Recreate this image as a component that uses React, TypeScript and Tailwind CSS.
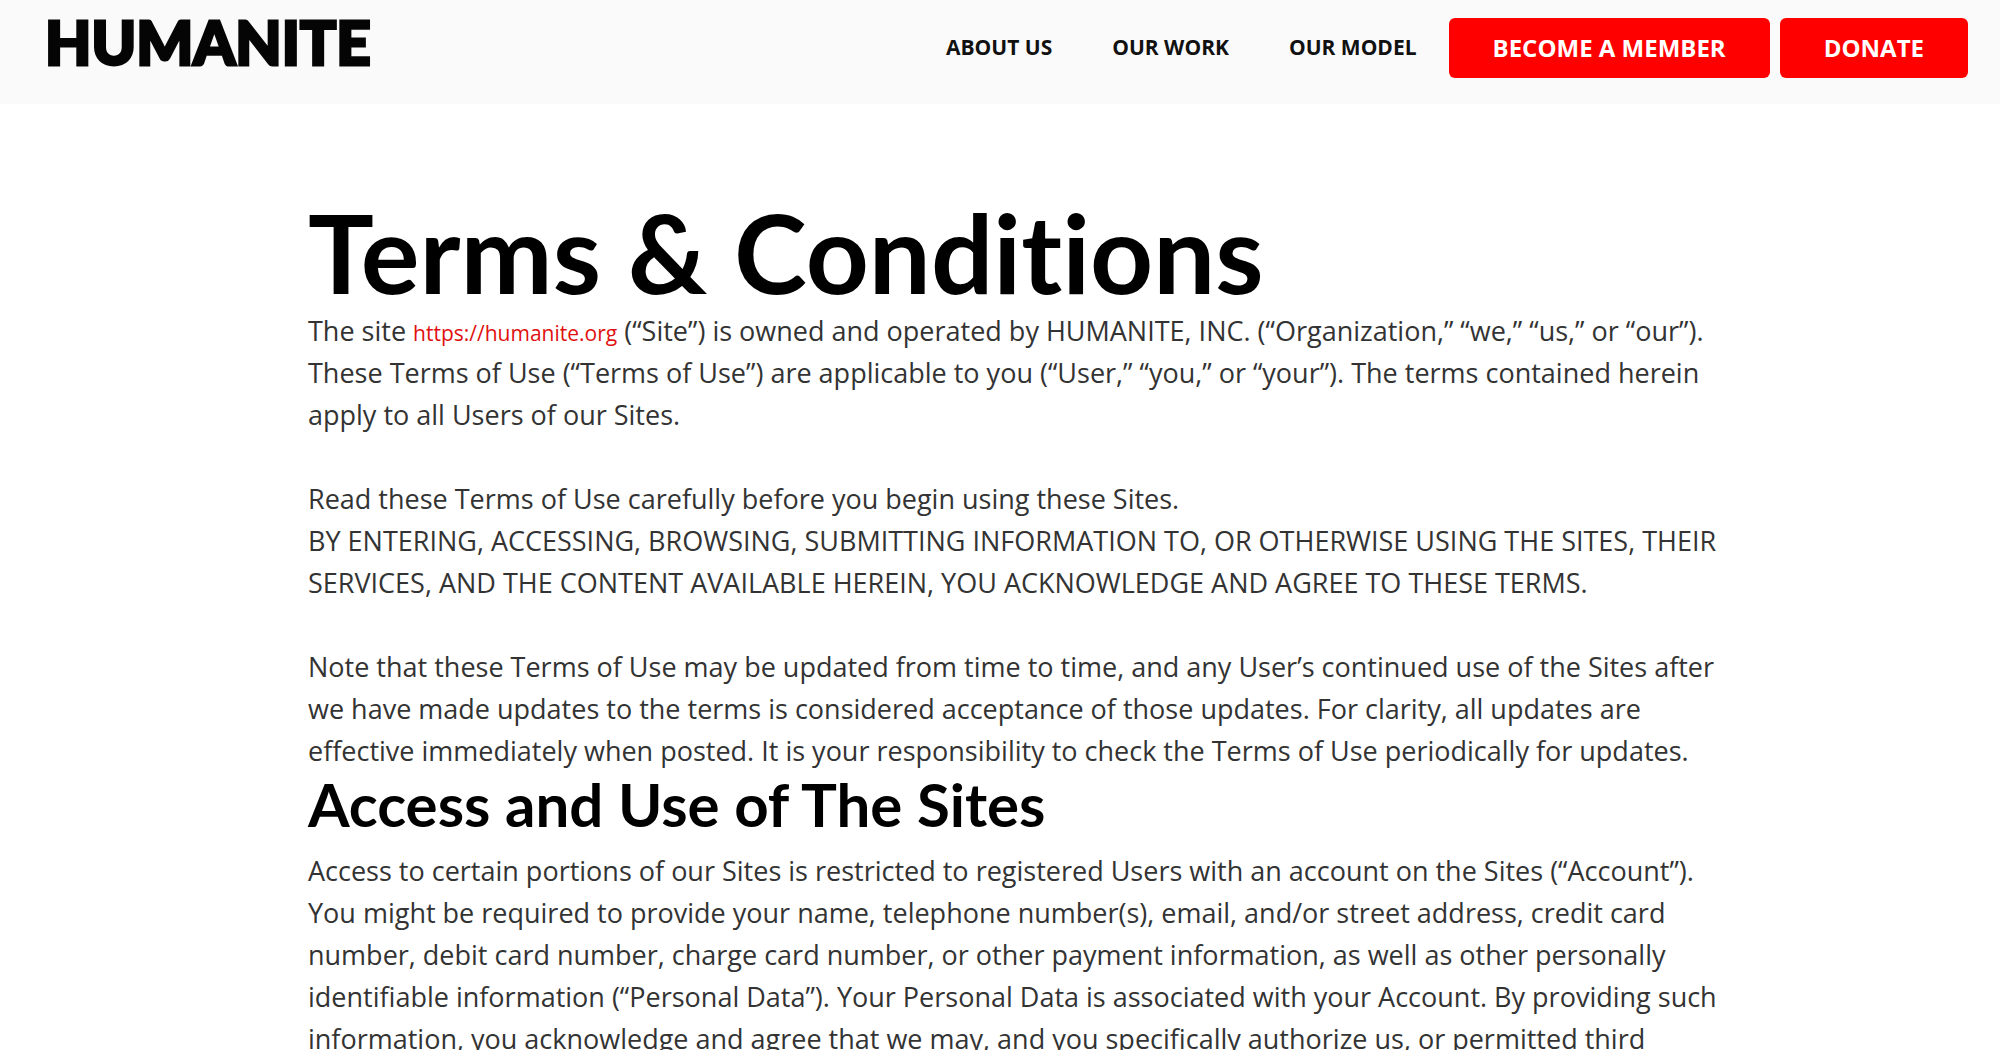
const navLinks = [
  { label: 'ABOUT US', href: '#about' },
  { label: 'OUR WORK', href: '#work' },
  { label: 'OUR MODEL', href: '#model' },
];

const Header = () => (
  <header className="flex h-26 items-start justify-between bg-[#fafafa] pr-8 pl-[45px]">
    <a
      href="#home"
      className="mt-2.5 font-['Lato',sans-serif] text-[60px] leading-16 font-black text-[#050505] [-webkit-text-stroke:3px_#050505]"
    >
      HUMANITE
    </a>
    <div className="mt-[18px] flex items-center">
      <nav className="mr-8 flex gap-15 text-[21px] font-bold text-[#111]">
        {navLinks.map((link) => (
          <a key={link.label} href={link.href}>{link.label}</a>
        ))}
      </nav>
      <div className="flex gap-2.5 text-2xl font-bold text-white">
        <button type="button" className="h-15 rounded-md bg-[#ff0000] px-11">BECOME A MEMBER</button>
        <button type="button" className="h-15 rounded-md bg-[#ff0000] px-11">DONATE</button>
      </div>
    </div>
  </header>
);

export default function App() {
  return (
    <div className="h-screen overflow-hidden bg-white font-['Open_Sans',sans-serif]">
      <Header />
      <main className="mt-[92px] ml-[15.4%] w-[70.9%] text-[27px] leading-[42px] text-[#333]">
        <h1 className="mb-1 font-['Lato',sans-serif] text-[110px] leading-[110px] font-bold text-black [font-variant-ligatures:none]">
          Terms &amp; Conditions
        </h1>
        <p>
          The site{' '}
          <a href="https://humanite.org" className="text-[21px] leading-none text-[#e01010]">https://humanite.org</a>{' '}
          (“Site”) is owned and operated by HUMANITE, INC. (“Organization,” “we,” “us,” or “our”). These Terms of Use
          (“Terms of Use”) are applicable to you (“User,” “you,” or “your”). The terms contained herein apply to all
          Users of our Sites.
        </p>
        <p className="mt-[42px]">Read these Terms of Use carefully before you begin using these Sites.</p>
        <p>
          BY ENTERING, ACCESSING, BROWSING, SUBMITTING INFORMATION TO, OR OTHERWISE USING THE SITES, THEIR SERVICES, AND
          THE CONTENT AVAILABLE HEREIN, YOU ACKNOWLEDGE AND AGREE TO THESE TERMS.
        </p>
        <p className="mt-[42px]">
          Note that these Terms of Use may be updated from time to time, and any User’s continued use of the Sites after
          we have made updates to the terms is considered acceptance of those updates. For clarity, all updates are
          effective immediately when posted. It is your responsibility to check the Terms of Use periodically for updates.
        </p>
        <h2 className="mb-3.5 font-['Lato',sans-serif] text-[60px] leading-16 font-bold text-black">
          Access and Use of The Sites
        </h2>
        <p>
          Access to certain portions of our Sites is restricted to registered Users with an account on the Sites
          (“Account”). You might be required to provide your name, telephone number(s), email, and/or street address,
          credit card number, debit card number, charge card number, or other payment information, as well as other
          personally identifiable information (“Personal Data”). Your Personal Data is associated with your Account. By
          providing such information, you acknowledge and agree that we may, and you specifically authorize us, or
          permitted third
        </p>
      </main>
    </div>
  );
}
